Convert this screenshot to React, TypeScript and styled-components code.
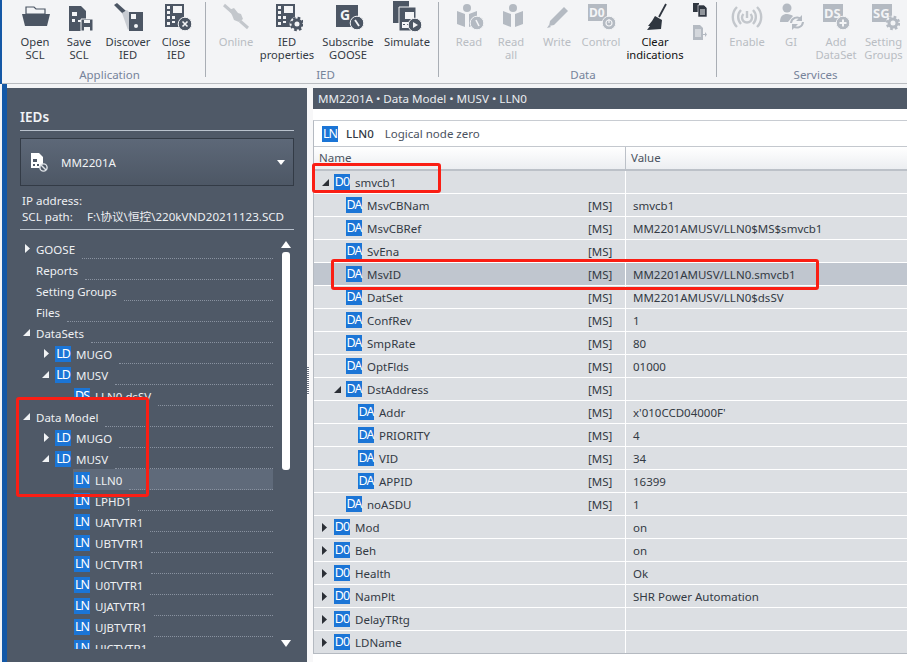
import React from "react";
import styled, { createGlobalStyle } from "styled-components";

const GlobalStyle = createGlobalStyle`
  html, body {
    margin: 0;
    padding: 0;
    background: #fff;
  }
  body {
    font-family: "Noto Sans", "Open Sans", "Noto Sans CJK SC", sans-serif;
  }
`;

const DARK = "#4c5664";
const MUTED = "#b4bac2";

const Page = styled.div`
  position: relative;
  width: 907px;
  height: 662px;
  overflow: hidden;
  background: #f3f4f6;
  display: flex;
  flex-direction: column;
`;

const Ribbon = styled.div`
  display: flex;
  height: 83px;
  margin-left: 2px;
  flex-shrink: 0;
  background: #f3f4f6;
  border-bottom: 1px solid #b9bcc0;
  box-shadow: -2px 0 0 #1458a6;
`;

const RibbonGroup = styled.div<{ $width: number; $pad: number; $last?: boolean }>`
  position: relative;
  width: ${(p) => p.$width}px;
  padding-left: ${(p) => p.$pad}px;
  box-sizing: border-box;
  display: flex;
  flex-direction: column;
  &::after {
    content: "";
    display: ${(p) => (p.$last ? "none" : "block")};
    position: absolute;
    right: 0;
    top: 2px;
    height: 75px;
    width: 1px;
    background: #a9aeb5;
  }
`;

const GroupButtons = styled.div`
  display: flex;
  height: 67px;
`;

const GroupLabel = styled.div`
  font-size: 11.5px;
  line-height: 15px;
  text-align: center;
  color: #76839a;
`;

const ToolButton = styled.div<{ $width: number; $off?: boolean; $black?: boolean }>`
  width: ${(p) => p.$width}px;
  flex-shrink: 0;
  display: flex;
  flex-direction: column;
  align-items: center;
  font-size: 11.2px;
  line-height: 13px;
  text-align: center;
  white-space: nowrap;
  color: ${(p) => (p.$off ? "#b9bdc3" : p.$black ? "#111" : "#333a44")};
`;

const ToolIcon = styled.div`
  height: 35px;
  display: flex;
  align-items: center;
  justify-content: center;
`;

const MiniStack = styled.div`
  width: 22px;
  display: flex;
  flex-direction: column;
  align-items: center;
  gap: 8px;
  padding-top: 2px;
`;

const Body = styled.div`
  flex: 1;
  display: flex;
  min-height: 0;
  padding-top: 4px;
  background: #f3f4f6;
`;

const BlueEdge = styled.div`
  width: 5px;
  margin-left: 2px;
  background: #1458a6;
  flex-shrink: 0;
  margin-top: -4px;
`;

const Sidebar = styled.aside`
  width: 300px;
  flex-shrink: 0;
  background: #4f5967;
  color: #eef0f3;
  padding: 0 13px;
  box-sizing: border-box;
  display: flex;
  flex-direction: column;
`;

const SideTitle = styled.div`
  font-size: 13.5px;
  font-weight: 600;
  height: 42px;
  line-height: 59px;
  border-bottom: 1px solid #b9c2cd;
  color: #f1f3f5;
`;

const IedSelect = styled.div`
  margin-top: 7px;
  height: 48px;
  box-sizing: border-box;
  border: 1px solid #333b46;
  background: linear-gradient(#5d6878, #4d5765);
  display: flex;
  align-items: center;
  padding: 1px 8px 0 9px;
  font-size: 11.6px;
  color: #f1f3f5;
`;

const IedName = styled.span`
  margin-left: 12px;
  flex: 1;
`;

const Caret = styled.div`
  width: 0;
  height: 0;
  border-left: 4px solid transparent;
  border-right: 4px solid transparent;
  border-top: 5px solid #fff;
`;

const InfoBlock = styled.div`
  height: 44px;
  box-sizing: border-box;
  padding: 7px 0 0 2px;
  font-size: 11.6px;
  line-height: 16px;
  border-bottom: 1px solid #b9c2cd;
  white-space: nowrap;
`;

const PathLabel = styled.span`
  display: inline-block;
  width: 65px;
`;

const TreeArea = styled.div`
  height: 411px;
  margin-top: 8px;
  display: flex;
  overflow: hidden;
  flex-shrink: 0;
`;

const TreeList = styled.div`
  width: 253px;
  flex-shrink: 0;
`;

const TreeRow = styled.div<{ $level: number; $selected?: boolean }>`
  height: 21px;
  display: flex;
  align-items: stretch;
  font-size: 11.5px;
  color: #eef0f3;
  margin-left: ${(p) => (p.$level === 2 ? 53 : 0)}px;
  padding-left: ${(p) => (p.$level === 0 ? 3 : p.$level === 1 ? 22 : 1)}px;
  background: ${(p) => (p.$selected ? "#5f6a7a" : "transparent")};
`;

const RowContent = styled.div<{ $clip?: boolean }>`
  display: flex;
  align-items: center;
  clip-path: ${(p) => (p.$clip ? "inset(0 -100px 6px 0)" : "none")};
`;

const TreeArrow = styled.div<{ $open?: boolean }>`
  width: 13px;
  flex-shrink: 0;
  display: flex;
  padding-left: ${(p) => (p.$open ? 0 : 2)}px;
  box-sizing: border-box;
`;

const Leader = styled.div`
  flex: 1;
  align-self: flex-end;
  margin-left: 7px;
  border-bottom: 1px dotted #8992a0;
`;

const Badge = styled.span`
  width: 16px;
  height: 16px;
  flex-shrink: 0;
  background: #1b75d6;
  color: #fff;
  font-size: 12.5px;
  line-height: 16px;
  text-align: center;
  letter-spacing: -1px;
`;

const TreeText = styled.span<{ $badge?: boolean }>`
  margin-left: ${(p) => (p.$badge ? 5 : 0)}px;
  padding-top: 1px;
  white-space: nowrap;
`;

const ScrollColumn = styled.div`
  flex: 1;
  display: flex;
  flex-direction: column;
  align-items: center;
  padding: 3px 0 0 5px;
`;

const ScrollThumb = styled.div`
  width: 8px;
  height: 218px;
  margin-top: 4px;
  background: #fff;
  border-radius: 3px;
`;

const ScrollGap = styled.div`
  flex: 1;
`;

const ScrollDown = styled.div`
  width: 0;
  height: 0;
  margin-bottom: 2px;
  border-left: 5px solid transparent;
  border-right: 5px solid transparent;
  border-top: 7px solid #fff;
`;

const ScrollUp = styled(ScrollDown)`
  margin-bottom: 0;
  border-top: 0;
  border-bottom: 7px solid #fff;
`;

const Splitter = styled.div`
  width: 6px;
  flex-shrink: 0;
  background: #f7f7f8;
  position: relative;
  &::after {
    content: "";
    position: absolute;
    left: 0;
    top: 279px;
    width: 2px;
    height: 28px;
    background: repeating-linear-gradient(#6b7280 0 1px, #fff 1px 2px);
  }
`;

const Content = styled.main`
  flex: 1;
  min-width: 0;
  background: #fff;
  display: flex;
  flex-direction: column;
`;

const Crumb = styled.div`
  height: 21px;
  background: #4f5967;
  color: #eceef1;
  font-size: 11.6px;
  line-height: 21px;
  padding-left: 5px;
`;

const DetailPanel = styled.div`
  margin-top: 11px;
  border-top: 1px solid #c8ccd2;
  border-left: 1px solid #b5bac1;
  border-bottom: 1px solid #b5bac1;
  display: flex;
  flex-direction: column;
`;

const NodeHead = styled.div`
  height: 25px;
  display: flex;
  align-items: center;
  padding-left: 8px;
  font-size: 11.5px;
  color: #333a44;
`;

const NodeName = styled.span`
  margin-left: 8px;
  font-weight: 500;
`;

const NodeDesc = styled.span`
  margin-left: 11px;
  color: #4a5260;
`;

const HeadRow = styled.div`
  display: grid;
  grid-template-columns: 311px 1fr;
  height: 25px;
  box-sizing: border-box;
  background: linear-gradient(#fff, #eceef1);
  border-top: 1px solid #c4c8ce;
  border-bottom: 2px solid #bcc1c8;
  font-size: 11.5px;
  color: #4a5260;
`;

const HeadCell = styled.div<{ $pad: number }>`
  padding-left: ${(p) => p.$pad}px;
  line-height: 22px;
  & + & {
    border-left: 1px solid #bcc1c8;
  }
`;

const GridRow = styled.div<{ $selected?: boolean }>`
  display: grid;
  grid-template-columns: 311px 1fr;
  height: 22px;
  margin-bottom: 1px;
  background: ${(p) => (p.$selected ? "#c0c6cf" : "#dcdfe3")};
  font-size: 11.5px;
  color: #333a44;
  &:last-child {
    margin-bottom: 0;
  }
`;

const NameCell = styled.div<{ $level: number }>`
  display: flex;
  align-items: center;
  padding-left: ${(p) => [8, 20, 44][p.$level]}px;
`;

const GridArrow = styled.div`
  width: 12px;
  flex-shrink: 0;
  display: flex;
`;

const GridName = styled.span`
  margin-left: 5px;
  flex: 1;
`;

const TagCell = styled.span`
  width: 37px;
  flex-shrink: 0;
`;

const ValueCell = styled.div`
  border-left: 1px solid #fff;
  padding-left: 7px;
  display: flex;
  align-items: center;
  white-space: nowrap;
`;

const Mark = styled.div<{ $l: number; $t: number; $w: number; $h: number }>`
  position: absolute;
  left: ${(p) => p.$l}px;
  top: ${(p) => p.$t}px;
  width: ${(p) => p.$w}px;
  height: ${(p) => p.$h}px;
  box-sizing: border-box;
  border: 3px solid #fa1e14;
  border-radius: 3px;
  pointer-events: none;
`;

const Closed = ({ color }: { color: string }) => (
  <svg width="5" height="9" viewBox="0 0 5 9">
    <path d="M0 0 L5 4.5 L0 9 Z" fill={color} />
  </svg>
);

const Open = ({ color }: { color: string }) => (
  <svg width="7" height="7" viewBox="0 0 7 7">
    <path d="M7 0 V7 H0 Z" fill={color} />
  </svg>
);

// shared pieces of the ribbon icons
const Chip = ({ c }: { c: string }) => (
  <g>
    <path d="M5 1h19v23H5z" fill={c} />
    <path d="M13 3h9v7h-9z" fill="#f3f4f6" />
    <path d="M7 3h3v3H7zM7 8h3v3H7zM7 13h3v3H7zM12 13h3v3h-3zM7 19h3v3H7zM12 18h3v2h-3z" fill="#f3f4f6" />
  </g>
);

const Gear = ({ c, x, y }: { c: string; x: number; y: number }) => (
  <g transform={`translate(${x} ${y})`}>
    <circle r="7.5" fill="#f3f4f6" />
    <circle r="4" fill="none" stroke={c} strokeWidth="3" />
    <circle r="6" fill="none" stroke={c} strokeWidth="2.4" strokeDasharray="2.6 2.1" />
  </g>
);

const Disc = ({ c, x, y, children }: { c: string; x: number; y: number; children?: React.ReactNode }) => (
  <g transform={`translate(${x} ${y})`}>
    <circle r="6.8" fill={c} stroke="#f3f4f6" strokeWidth="1" />
    {children}
  </g>
);

const Svg = ({ w = 32, h = 30, children }: { w?: number; h?: number; children: React.ReactNode }) => (
  <svg width={w} height={h} viewBox={`0 0 ${w} ${h}`}>
    {children}
  </svg>
);

const IconOpen = () => (
  <Svg>
    <path d="M7 4h8l2 2h9v5H7z" fill="none" stroke={DARK} strokeWidth="1.2" />
    <path d="M3 11h28l-3 12H6z" fill={DARK} />
  </Svg>
);

const IconSave = () => (
  <Svg>
    <path d="M6 3h12l5 5v20H6z" fill={DARK} />
    <path d="M9 9h5v4H9zM9 16h3v3H9zM15 17h3v2h-3z" fill="#f3f4f6" />
    <path d="M18 16h12v12H18z" fill={DARK} stroke="#f3f4f6" />
    <path d="M21 17h6v3h-6zM21 24h6v4h-6z" fill="#f3f4f6" />
  </Svg>
);

const IconDiscover = () => (
  <Svg>
    <path d="M2 2l3-2 9 8-3 3z" fill={DARK} />
    <path d="M10 10l5-3 3 3v15l-2 2z" fill="#c8ccd2" />
    <path d="M17 9h14v19H17z" fill={DARK} />
    <path d="M19 11h5v5h-5z" fill="#f3f4f6" />
    <circle cx="24" cy="23" r="2" fill="#f3f4f6" />
  </Svg>
);

const IconCloseIed = () => (
  <Svg>
    <Chip c={DARK} />
    <Disc c={DARK} x={25} y={21}>
      <path d="M-2.5-2.5L2.5 2.5M2.5-2.5L-2.5 2.5" stroke="#f3f4f6" strokeWidth="1.6" />
    </Disc>
  </Svg>
);

const IconOnline = () => (
  <Svg>
    <path d="M4 2L12 9M20 18L28 25" stroke="#c3c7cc" strokeWidth="3" />
    <path d="M9 7l5-2 4 5 3 1 2 5-4 3-5-2-2-5z" fill="#c3c7cc" />
  </Svg>
);

const IconProperties = () => (
  <Svg>
    <Chip c={DARK} />
    <Gear c={DARK} x={26} y={21} />
  </Svg>
);

const IconSubscribe = () => (
  <Svg>
    <path d="M4 2h22v22H4z" fill={DARK} />
    <text x="8" y="17" fontSize="14" fontWeight="700" fill="#f3f4f6" fontFamily="Noto Sans">
      G
    </text>
    <Disc c={DARK} x={25} y={20}>
      <path d="M-2-3L2 3" stroke="#f3f4f6" strokeWidth="1.8" />
    </Disc>
  </Svg>
);

const IconSimulate = () => (
  <Svg h={34}>
    <path d="M2 0h16v22H2z" fill={DARK} />
    <path d="M8 6h17v24H8z" fill={DARK} stroke="#f3f4f6" />
    <path d="M14 11h9v7h-9zM11 21h9v6h-9z" fill="#f3f4f6" />
    <path d="M12 23h2v1h-2zM16 23h2v1h-2z" fill={DARK} />
    <Disc c={DARK} x={24} y={24}>
      <path d="M-2-3L3 0L-2 3z" fill="#f3f4f6" />
    </Disc>
  </Svg>
);

const Person = ({ c }: { c: string }) => (
  <g transform="translate(2 0)">
    <circle cx="12" cy="5" r="4" fill={c} />
    <path d="M2 8l8 3v13l-8-3zM22 8l-8 3v13l8-3z" fill={c} />
  </g>
);

const IconRead = () => (
  <Svg>
    <Person c={MUTED} />
    <Disc c={MUTED} x={24} y={20}>
      <path d="M-1-3L2 3" stroke="#f3f4f6" strokeWidth="1.6" />
    </Disc>
  </Svg>
);

const IconReadAll = () => (
  <Svg w={24}>
    <Person c={MUTED} />
  </Svg>
);

const IconWrite = () => (
  <Svg>
    <path d="M9 18L23 4l4 4-14 14-5 1z" fill={MUTED} />
    <path d="M8 22l2 2-4 1z" fill={MUTED} />
  </Svg>
);

const IconControl = () => (
  <Svg>
    <path d="M3 1h19v17H3z" fill={MUTED} />
    <text x="4" y="14" fontSize="12" fontWeight="700" fill="#f3f4f6" fontFamily="Noto Sans">
      D0
    </text>
    <Disc c={MUTED} x={24} y={20}>
      <circle r="3" fill="none" stroke="#f3f4f6" strokeWidth="1.2" />
      <path d="M0-4V0" stroke="#f3f4f6" strokeWidth="1.2" />
    </Disc>
  </Svg>
);

const IconBroom = () => (
  <Svg>
    <path d="M27 1L20 14" stroke="#2f3640" strokeWidth="1.8" />
    <path d="M16 13l7 4-1 9-14 1 3-4-2 0 4-5z" fill="#2f3640" />
  </Svg>
);

const IconCopyDoc = () => (
  <svg width="14" height="15" viewBox="0 0 14 15">
    <path d="M0 1h6v9H0z" fill="#2f3640" />
    <path d="M5 3h6l3 3v9H5z" fill="#2f3640" stroke="#f3f4f6" strokeWidth="0.6" />
    <path d="M7 8h5M7 10h5M7 12h5" stroke="#f3f4f6" />
  </svg>
);

const IconExportDoc = () => (
  <svg width="14" height="15" viewBox="0 0 14 15">
    <path d="M0 0h7l3 3v12H0z" fill={MUTED} />
    <path d="M2 5h6M2 7h6M2 9h6M2 11h6" stroke="#f3f4f6" />
    <path d="M9 9h3V7l2 2.5L12 12v-2H9z" fill={MUTED} />
  </svg>
);

const IconEnable = () => (
  <Svg w={32}>
    <g fill="none" stroke="#c3c7cc" strokeWidth="2.4">
      <path d="M6 4a14 14 0 0 0 0 20M26 4a14 14 0 0 1 0 20" />
      <path d="M10 7a10 10 0 0 0 0 14M22 7a10 10 0 0 1 0 14" />
      <path d="M12.5 11a5 5 0 1 0 7 0" />
      <path d="M16 8v7" />
    </g>
  </Svg>
);

const IconGI = () => (
  <Svg>
    <circle cx="12" cy="5" r="4.5" fill={MUTED} />
    <path d="M5 19c0-6 3-8 7-8 2 0 5 1 6 2l-5 6z" fill={MUTED} />
    <g fill="none" stroke={MUTED} strokeWidth="2">
      <path d="M16 20a6 6 0 0 1 10-4M28 19a6 6 0 0 1-10 4" />
    </g>
    <path d="M27 12v6h-6zM17 27v-6h6z" fill={MUTED} />
  </Svg>
);

const IconAddDataSet = () => (
  <Svg>
    <path d="M3 1h20v18H3z" fill={MUTED} />
    <text x="4" y="15" fontSize="13" fontWeight="700" fill="#f3f4f6" fontFamily="Noto Sans">
      DS
    </text>
    <Disc c={MUTED} x={23} y={20}>
      <path d="M-3.5 0H3.5M0-3.5V3.5" stroke="#f3f4f6" strokeWidth="2" />
    </Disc>
  </Svg>
);

const IconSettingGroups = () => (
  <Svg>
    <path d="M4 1h20v18H4z" fill={MUTED} />
    <text x="5" y="15" fontSize="13" fontWeight="700" fill="#f3f4f6" fontFamily="Noto Sans">
      SG
    </text>
    <Gear c={MUTED} x={25} y={20} />
  </Svg>
);

const IconIedDevice = () => (
  <svg width="19" height="20" viewBox="0 0 19 20">
    <path d="M1 0h8l4 4v11H1z" fill="#fff" />
    <path d="M3 6h4v3H3zM3 11h2v2H3zM7 11h2v2H7z" fill="#4f5967" />
    <circle cx="13.5" cy="14.5" r="3.6" fill="#4f5967" stroke="#dfe3e8" strokeWidth="1.4" />
    <path d="M11 12l5 5" stroke="#dfe3e8" strokeWidth="1.4" />
  </svg>
);

type Tool = { label: string[]; width: number; icon: React.ReactNode; off?: boolean; black?: boolean };

const appTools: Tool[] = [
  { label: ["Open", "SCL"], width: 44, icon: <IconOpen /> },
  { label: ["Save", "SCL"], width: 44, icon: <IconSave /> },
  { label: ["Discover", "IED"], width: 54, icon: <IconDiscover /> },
  { label: ["Close", "IED"], width: 42, icon: <IconCloseIed /> },
];

const iedTools: Tool[] = [
  { label: ["Online"], width: 48, icon: <IconOnline />, off: true },
  { label: ["IED", "properties"], width: 54, icon: <IconProperties /> },
  { label: ["Subscribe", "GOOSE"], width: 68, icon: <IconSubscribe /> },
  { label: ["Simulate"], width: 50, icon: <IconSimulate /> },
];

const dataTools: Tool[] = [
  { label: ["Read"], width: 40, icon: <IconRead />, off: true },
  { label: ["Read", "all"], width: 44, icon: <IconReadAll />, off: true },
  { label: ["Write"], width: 48, icon: <IconWrite />, off: true },
  { label: ["Control"], width: 40, icon: <IconControl />, off: true },
  { label: ["Clear", "indications"], width: 68, icon: <IconBroom />, black: true },
];

const serviceTools: Tool[] = [
  { label: ["Enable"], width: 46, icon: <IconEnable />, off: true },
  { label: ["GI"], width: 42, icon: <IconGI />, off: true },
  { label: ["Add", "DataSet"], width: 48, icon: <IconAddDataSet />, off: true },
  { label: ["Setting", "Groups"], width: 47, icon: <IconSettingGroups />, off: true },
];

const ToolList = ({ tools }: { tools: Tool[] }) => (
  <>
    {tools.map((t) => (
      <ToolButton key={t.label.join()} $width={t.width} $off={t.off} $black={t.black}>
        <ToolIcon>{t.icon}</ToolIcon>
        {t.label.map((l) => (
          <div key={l}>{l}</div>
        ))}
      </ToolButton>
    ))}
  </>
);

type TreeItem = {
  text: string;
  level: number;
  badge?: string;
  arrow?: "open" | "closed";
  selected?: boolean;
  clip?: boolean;
};

const lnNames = ["LPHD1", "UATVTR1", "UBTVTR1", "UCTVTR1", "U0TVTR1", "UJATVTR1", "UJBTVTR1", "UJCTVTR1"];

const tree: TreeItem[] = [
  { text: "GOOSE", level: 0, arrow: "closed" },
  { text: "Reports", level: 0 },
  { text: "Setting Groups", level: 0 },
  { text: "Files", level: 0 },
  { text: "DataSets", level: 0, arrow: "open" },
  { text: "MUGO", level: 1, badge: "LD", arrow: "closed" },
  { text: "MUSV", level: 1, badge: "LD", arrow: "open" },
  { text: "LLN0.dsSV", level: 2, badge: "DS", clip: true },
  { text: "Data Model", level: 0, arrow: "open" },
  { text: "MUGO", level: 1, badge: "LD", arrow: "closed" },
  { text: "MUSV", level: 1, badge: "LD", arrow: "open" },
  { text: "LLN0", level: 2, badge: "LN", selected: true },
  ...lnNames.map((text) => ({ text, level: 2, badge: "LN" })),
];

type GridItem = {
  name: string;
  badge: string;
  level: number;
  value?: string;
  tag?: boolean;
  arrow?: "open" | "closed";
  selected?: boolean;
};

const rows: GridItem[] = [
  { name: "smvcb1", badge: "D0", level: 0, arrow: "open" },
  { name: "MsvCBNam", badge: "DA", level: 1, tag: true, value: "smvcb1" },
  { name: "MsvCBRef", badge: "DA", level: 1, tag: true, value: "MM2201AMUSV/LLN0$MS$smvcb1" },
  { name: "SvEna", badge: "DA", level: 1, tag: true },
  { name: "MsvID", badge: "DA", level: 1, tag: true, value: "MM2201AMUSV/LLN0.smvcb1", selected: true },
  { name: "DatSet", badge: "DA", level: 1, tag: true, value: "MM2201AMUSV/LLN0$dsSV" },
  { name: "ConfRev", badge: "DA", level: 1, tag: true, value: "1" },
  { name: "SmpRate", badge: "DA", level: 1, tag: true, value: "80" },
  { name: "OptFlds", badge: "DA", level: 1, tag: true, value: "01000" },
  { name: "DstAddress", badge: "DA", level: 1, tag: true, arrow: "open" },
  { name: "Addr", badge: "DA", level: 2, tag: true, value: "x'010CCD04000F'" },
  { name: "PRIORITY", badge: "DA", level: 2, tag: true, value: "4" },
  { name: "VID", badge: "DA", level: 2, tag: true, value: "34" },
  { name: "APPID", badge: "DA", level: 2, tag: true, value: "16399" },
  { name: "noASDU", badge: "DA", level: 1, tag: true, value: "1" },
  { name: "Mod", badge: "D0", level: 0, arrow: "closed", value: "on" },
  { name: "Beh", badge: "D0", level: 0, arrow: "closed", value: "on" },
  { name: "Health", badge: "D0", level: 0, arrow: "closed", value: "Ok" },
  { name: "NamPlt", badge: "D0", level: 0, arrow: "closed", value: "SHR Power Automation" },
  { name: "DelayTRtg", badge: "D0", level: 0, arrow: "closed" },
  { name: "LDName", badge: "D0", level: 0, arrow: "closed" },
];

const App: React.FC = () => {
  return (
    <Page>
      <GlobalStyle />
      <Ribbon>
        <RibbonGroup $width={204} $pad={11}>
          <GroupButtons>
            <ToolList tools={appTools} />
          </GroupButtons>
          <GroupLabel>Application</GroupLabel>
        </RibbonGroup>
        <RibbonGroup $width={233} $pad={6}>
          <GroupButtons>
            <ToolList tools={iedTools} />
          </GroupButtons>
          <GroupLabel>IED</GroupLabel>
        </RibbonGroup>
        <RibbonGroup $width={278} $pad={10}>
          <GroupButtons>
            <ToolList tools={dataTools} />
            <MiniStack>
              <IconCopyDoc />
              <IconExportDoc />
            </MiniStack>
          </GroupButtons>
          <GroupLabel>Data</GroupLabel>
        </RibbonGroup>
        <RibbonGroup $width={190} $pad={7} $last>
          <GroupButtons>
            <ToolList tools={serviceTools} />
          </GroupButtons>
          <GroupLabel>Services</GroupLabel>
        </RibbonGroup>
      </Ribbon>
      <Body>
        <BlueEdge />
        <Sidebar>
          <SideTitle>IEDs</SideTitle>
          <IedSelect>
            <IconIedDevice />
            <IedName>MM2201A</IedName>
            <Caret />
          </IedSelect>
          <InfoBlock>
            <div>IP address:</div>
            <div>
              <PathLabel>SCL path:</PathLabel>
              F:\协议\恒控\220kVND20211123.SCD
            </div>
          </InfoBlock>
          <TreeArea>
            <TreeList>
              {tree.map((item, i) => (
                <TreeRow key={i} $level={item.level} $selected={item.selected}>
                  <RowContent $clip={item.clip}>
                    {item.level < 2 && (
                      <TreeArrow $open={item.arrow === "open"}>
                        {item.arrow === "open" && <Open color="#f1f3f5" />}
                        {item.arrow === "closed" && <Closed color="#f1f3f5" />}
                      </TreeArrow>
                    )}
                    {item.badge && <Badge>{item.badge}</Badge>}
                    <TreeText $badge={!!item.badge}>{item.text}</TreeText>
                  </RowContent>
                  <Leader />
                </TreeRow>
              ))}
            </TreeList>
            <ScrollColumn>
              <ScrollUp />
              <ScrollThumb />
              <ScrollGap />
              <ScrollDown />
            </ScrollColumn>
          </TreeArea>
        </Sidebar>
        <Splitter />
        <Content>
          <Crumb>MM2201A • Data Model • MUSV • LLN0</Crumb>
          <DetailPanel>
            <NodeHead>
              <Badge>LN</Badge>
              <NodeName>LLN0</NodeName>
              <NodeDesc>Logical node zero</NodeDesc>
            </NodeHead>
            <HeadRow>
              <HeadCell $pad={5}>Name</HeadCell>
              <HeadCell $pad={5}>Value</HeadCell>
            </HeadRow>
            {rows.map((r) => (
              <GridRow key={r.name} $selected={r.selected}>
                <NameCell $level={r.level}>
                  {r.level < 2 && (
                    <GridArrow>
                      {r.arrow === "open" && <Open color="#2b2f36" />}
                      {r.arrow === "closed" && <Closed color="#2b2f36" />}
                    </GridArrow>
                  )}
                  <Badge>{r.badge}</Badge>
                  <GridName>{r.name}</GridName>
                  {r.tag && <TagCell>[MS]</TagCell>}
                </NameCell>
                <ValueCell>{r.value}</ValueCell>
              </GridRow>
            ))}
          </DetailPanel>
        </Content>
      </Body>
      <Mark $l={16} $t={397} $w={133} $h={100} />
      <Mark $l={312} $t={163} $w={129} $h={30} />
      <Mark $l={331} $t={259} $w={488} $h={31} />
    </Page>
  );
};

export default App;
